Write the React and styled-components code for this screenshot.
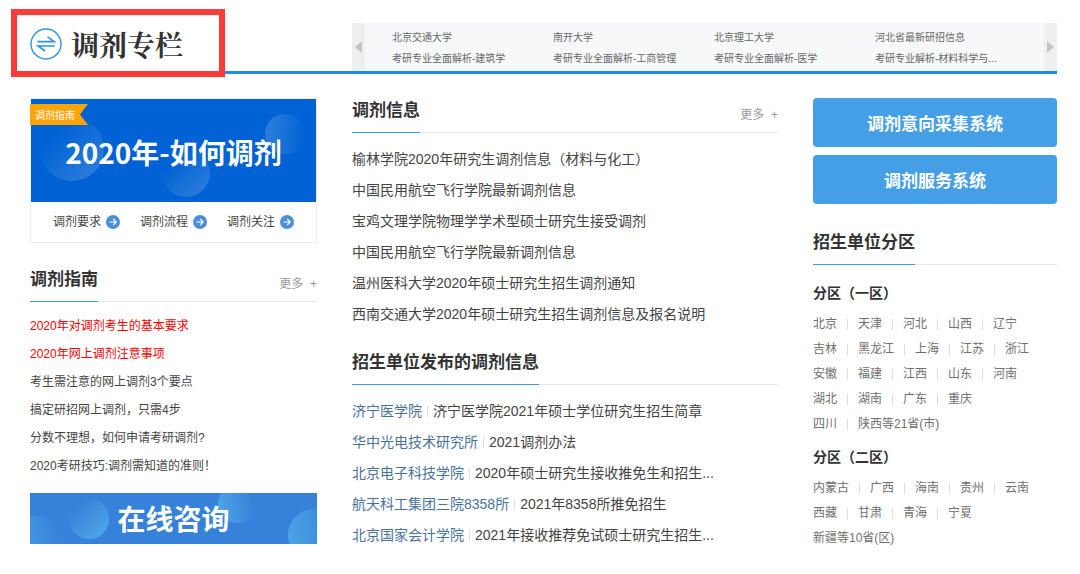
import React from "react";
import styled, { createGlobalStyle } from "styled-components";

const GlobalStyle = createGlobalStyle`
  * { box-sizing: border-box; }

  body {
    margin: 0;
    background: #fff;
    color: #333;
    font: 12px/24px "Liberation Sans", "Noto Sans CJK SC", sans-serif;
  }

  h1, h2, h3, ul { margin: 0; padding: 0; }
  ul { list-style: none; }
  a { color: inherit; text-decoration: none; }
  button { border: 0; padding: 0; font-family: inherit; cursor: pointer; }
`;

const Page = styled.div`
  padding: 0 23px 24px 30px;
`;

const Columns = styled.div`
  display: grid;
  grid-template-columns: 287fr 426fr 244fr;
  column-gap: 35px;
`;

const Header = styled(Columns).attrs({ as: "header" })`
  border-bottom: 3px solid #1f8ce6;
  margin-bottom: 24px;
`;

const Brand = styled.div`
  position: relative;
  display: flex;
  align-items: center;
  gap: 8px;
  padding-top: 17px;

  h1 {
    font: bold 28px/40px "Noto Serif CJK SC", "Noto Sans CJK SC", serif;
  }
`;

const Highlight = styled.div`
  position: absolute;
  top: 9px;
  bottom: -6px;
  left: -19px;
  width: 214px;
  border: 6px solid #fc3a3a;
  pointer-events: none;
`;

const SchoolStrip = styled.nav`
  grid-column: span 2;
  display: flex;
  margin-top: 23px;
  background: #f7f8fa;
`;

const Arrow = styled.button`
  display: flex;
  align-items: center;
  justify-content: center;
  flex: 0 0 13px;
  background: #eeeff1;
`;

const SchoolList = styled.ul`
  flex: 1;
  min-width: 0;
  display: grid;
  grid-template-columns: repeat(4, 1fr);
  padding: 4px 8px 2px 27px;
  font-size: 10px;
  line-height: 21px;
  color: #666;
  white-space: nowrap;

  a { display: block; }
`;

const Heading = styled.div`
  display: flex;
  justify-content: space-between;
  margin-top: ${(props) => props.$top || 0}px;
  border-bottom: 1px solid #e8e8e8;

  h2 {
    margin-bottom: -1px;
    padding-bottom: 8px;
    border-bottom: 1px solid #3d9ae8;
    font-size: 17px;
    line-height: 26px;
  }
`;

const More = styled.a`
  padding-top: 5px;
  color: #999;
  white-space: pre;
`;

const Card = styled.section`
  border: 1px solid #ededed;
`;

const Banner = styled.div`
  position: relative;
  display: flex;
  align-items: center;
  justify-content: center;
  height: 103px;
  padding-top: 2px;
  background: #0062d4;
  color: #fff;
  font: bold 28px/40px "Noto Sans CJK SC", sans-serif;

  span { position: relative; }
`;

const Backdrop = styled.svg`
  position: absolute;
  inset: 0;
  width: 100%;
  height: 100%;
`;

const Ribbon = styled.div`
  position: absolute;
  top: 5px;
  left: -1px;
  width: 58px;
  padding-left: 5px;
  background: #ffa405;
  clip-path: polygon(0 0, 100% 0, 50px 50%, 100% 100%, 0 100%);
  font-size: 10px;
  font-weight: normal;
  line-height: 21px;
`;

const CardLinks = styled.div`
  display: flex;
  justify-content: center;
  gap: 20px;
  padding: 8px 0;
  color: #444;

  a {
    display: flex;
    align-items: center;
    gap: 5px;
  }
`;

const GuideList = styled.ul`
  padding: 10px 0 13px;
  line-height: 28px;
`;

const GuideItem = styled.li`
  color: ${(props) => (props.$hot ? "#f00" : "#444")};
`;

const Consult = styled.button`
  position: relative;
  display: block;
  width: 100%;
  height: 51px;
  background: #3682da;
  color: #fff;
  font: bold 28px/51px "Noto Sans CJK SC", sans-serif;

  span { position: relative; }
`;

const NewsList = styled.ul`
  padding-top: 11px;
  font-size: 14px;
  line-height: 31px;
  color: #444;

  li {
    display: flex;
    align-items: center;
    white-space: nowrap;
  }
`;

const Source = styled.a`
  display: flex;
  align-items: center;
  color: #4a719c;

  &::after {
    content: "";
    height: 11px;
    margin: 0 5px;
    border-left: 1px solid #ddd;
  }
`;

const SystemButton = styled.button`
  display: block;
  width: 100%;
  height: 49px;
  margin-bottom: 8px;
  border-radius: 4px;
  background: #459fe6;
  color: #fff;
  font-size: 17px;
  font-weight: bold;
`;

const Zones = styled.div`
  padding-top: 8px;

  h3 {
    margin: 8px 0 6px;
    font-size: 14px;
    line-height: 25px;
  }
`;

const ZoneRow = styled.ul`
  display: flex;
  line-height: 25px;
  color: #707070;
  white-space: nowrap;

  li {
    display: flex;
    align-items: center;
  }

  li + li::before {
    content: "";
    height: 11px;
    margin: 0 10px;
    border-left: 1px solid #ddd;
  }
`;

const schools = [
  ["北京交通大学", "考研专业全面解析-建筑学"],
  ["南开大学", "考研专业全面解析-工商管理"],
  ["北京理工大学", "考研专业全面解析-医学"],
  ["河北省最新研招信息", "考研专业解析-材料科学与..."],
];

const guides = [
  { text: "2020年对调剂考生的基本要求", hot: true },
  { text: "2020年网上调剂注意事项", hot: true },
  { text: "考生需注意的网上调剂3个要点" },
  { text: "搞定研招网上调剂，只需4步" },
  { text: "分数不理想，如何申请考研调剂?" },
  { text: "2020考研技巧:调剂需知道的准则！" },
];

const news = [
  "榆林学院2020年研究生调剂信息（材料与化工）",
  "中国民用航空飞行学院最新调剂信息",
  "宝鸡文理学院物理学学术型硕士研究生接受调剂",
  "中国民用航空飞行学院最新调剂信息",
  "温州医科大学2020年硕士研究生招生调剂通知",
  "西南交通大学2020年硕士研究生招生调剂信息及报名说明",
];

const notices = [
  ["济宁医学院", "济宁医学院2021年硕士学位研究生招生简章"],
  ["华中光电技术研究所", "2021调剂办法"],
  ["北京电子科技学院", "2020年硕士研究生接收推免生和招生..."],
  ["航天科工集团三院8358所", "2021年8358所推免招生"],
  ["北京国家会计学院", "2021年接收推荐免试硕士研究生招生..."],
];

const zones = [
  {
    title: "分区（一区）",
    rows: [
      ["北京", "天津", "河北", "山西", "辽宁"],
      ["吉林", "黑龙江", "上海", "江苏", "浙江"],
      ["安徽", "福建", "江西", "山东", "河南"],
      ["湖北", "湖南", "广东", "重庆"],
      ["四川", "陕西等21省(市)"],
    ],
  },
  {
    title: "分区（二区）",
    rows: [
      ["内蒙古", "广西", "海南", "贵州", "云南"],
      ["西藏", "甘肃", "青海", "宁夏"],
      ["新疆等10省(区)"],
    ],
  },
];

const SwapIcon = () => (
  <svg width="33" height="32" viewBox="0 0 33 32" fill="none" stroke="#2b92e8" aria-hidden="true">
    <circle cx="16" cy="16" r="15" strokeWidth="1.4" />
    <path d="M7.5 13.6H24.3L17.6 8.8M24.8 18H8.2L15 23" strokeWidth="1.6" />
  </svg>
);

const GoIcon = () => (
  <svg width="14" height="14" viewBox="0 0 14 14" fill="none" aria-hidden="true">
    <circle cx="7" cy="7" r="7" fill="#4a8edb" />
    <path d="M3.5 7H10M7.2 4L10.2 7L7.2 10" stroke="#fff" strokeWidth="1.2" />
  </svg>
);

const Triangle = ({ d }) => (
  <svg width="7" height="12" viewBox="0 0 7 12" aria-hidden="true"><path d={d} fill="#c4c4c4" /></svg>
);

const SectionHeading = ({ title, more, top }) => (
  <Heading $top={top}>
    <h2>{title}</h2>
    {more && <More href="#">{"更多  +"}</More>}
  </Heading>
);

const App = () => {
  return (
    <Page>
      <GlobalStyle />
      <Header>
        <Brand>
          <SwapIcon />
          <h1>调剂专栏</h1>
          <Highlight />
        </Brand>
        <SchoolStrip>
          <Arrow aria-label="上一组"><Triangle d="M7 0V12L0 6Z" /></Arrow>
          <SchoolList>
            {schools.map(([name, topic]) => (
              <li key={name}>
                <a href="#">{name}</a>
                <a href="#">{topic}</a>
              </li>
            ))}
          </SchoolList>
          <Arrow aria-label="下一组"><Triangle d="M0 0V12L7 6Z" /></Arrow>
        </SchoolStrip>
      </Header>

      <Columns>
        <div>
          <Card>
            <Banner>
              <Backdrop viewBox="0 0 285 103" preserveAspectRatio="none">
                <defs>
                  <linearGradient id="bubbleDown" x1="0" y1="0" x2="1" y2="1">
                    <stop offset="0.25" stopColor="#fff" stopOpacity="0" />
                    <stop offset="1" stopColor="#fff" stopOpacity="0.2" />
                  </linearGradient>
                  <linearGradient id="bubbleUp" x1="0" y1="0.5" x2="1" y2="0.6">
                    <stop offset="0" stopColor="#fff" stopOpacity="0.18" />
                    <stop offset="1" stopColor="#fff" stopOpacity="0" />
                  </linearGradient>
                </defs>
                <circle cx="41" cy="50" r="32" fill="url(#bubbleDown)" />
                <circle cx="155" cy="74" r="24" fill="url(#bubbleDown)" />
                <circle cx="254" cy="35" r="20" fill="url(#bubbleUp)" />
              </Backdrop>
              <span>2020年-如何调剂</span>
              <Ribbon>调剂指南</Ribbon>
            </Banner>
            <CardLinks>
              {["调剂要求", "调剂流程", "调剂关注"].map((label) => (
                <a href="#" key={label}>{label}<GoIcon /></a>
              ))}
            </CardLinks>
          </Card>

          <SectionHeading title="调剂指南" more top={24} />
          <GuideList>
            {guides.map((item) => (
              <GuideItem key={item.text} $hot={item.hot}><a href="#">{item.text}</a></GuideItem>
            ))}
          </GuideList>
          <Consult>
            <Backdrop viewBox="0 0 287 51" preserveAspectRatio="none">
              <defs>
                <linearGradient id="consultDown" x1="0" y1="0" x2="1" y2="1">
                  <stop offset="0.2" stopColor="#58b4ea" stopOpacity="0" />
                  <stop offset="0.9" stopColor="#58b4ea" stopOpacity="0.75" />
                </linearGradient>
                <linearGradient id="consultUp" x1="0" y1="0.6" x2="1" y2="0.4">
                  <stop offset="0" stopColor="#58b4ea" stopOpacity="0.7" />
                  <stop offset="0.9" stopColor="#58b4ea" stopOpacity="0" />
                </linearGradient>
              </defs>
              <circle cx="6" cy="55" r="32" fill="url(#consultUp)" />
              <circle cx="59" cy="26" r="20" fill="url(#consultDown)" />
              <circle cx="207" cy="11" r="19" fill="url(#consultUp)" />
              <circle cx="284" cy="42" r="26" fill="url(#consultUp)" />
            </Backdrop>
            <span>在线咨询</span>
          </Consult>
        </div>

        <div>
          <SectionHeading title="调剂信息" more />
          <NewsList>
            {news.map((text, idx) => (
              <li key={idx}><a href="#">{text}</a></li>
            ))}
          </NewsList>
          <SectionHeading title="招生单位发布的调剂信息" top={20} />
          <NewsList>
            {notices.map(([source, text]) => (
              <li key={source}>
                <Source href="#">{source}</Source>
                <a href="#">{text}</a>
              </li>
            ))}
          </NewsList>
        </div>

        <div>
          <SystemButton>调剂意向采集系统</SystemButton>
          <SystemButton>调剂服务系统</SystemButton>
          <SectionHeading title="招生单位分区" top={26} />
          <Zones>
            {zones.map((zone) => (
              <React.Fragment key={zone.title}>
                <h3>{zone.title}</h3>
                {zone.rows.map((row) => (
                  <ZoneRow key={row[0]}>
                    {row.map((place) => <li key={place}><a href="#">{place}</a></li>)}
                  </ZoneRow>
                ))}
              </React.Fragment>
            ))}
          </Zones>
        </div>
      </Columns>
    </Page>
  );
};

export default App;
